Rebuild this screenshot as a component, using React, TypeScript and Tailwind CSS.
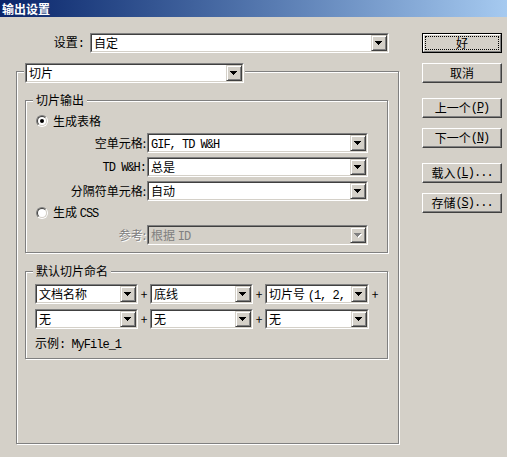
import React from "react";

type Kids = { children?: React.ReactNode };

// latin text in the dialog uses a narrow fixed-width face
const L = ({ children }: Kids) => (
  <span className="font-['Liberation_Mono',monospace] text-[12px] tracking-[-1px]">{children}</span>
);

function Arrow({ disabled }: { disabled?: boolean }) {
  const c = disabled ? "#808080" : "#000";
  return (
    <svg width="8" height="5" viewBox="0 0 8 5" shapeRendering="crispEdges">
      {disabled && (
        <g fill="#fff">
          <rect x="1" y="1" width="7" height="1" />
          <rect x="2" y="2" width="5" height="1" />
          <rect x="3" y="3" width="3" height="1" />
          <rect x="4" y="4" width="1" height="1" />
        </g>
      )}
      <g fill={c}>
        <rect x="0" y="0" width="7" height="1" />
        <rect x="1" y="1" width="5" height="1" />
        <rect x="2" y="2" width="3" height="1" />
        <rect x="3" y="3" width="1" height="1" />
      </g>
    </svg>
  );
}

function Combo({
  value,
  className,
  disabled,
}: {
  value: React.ReactNode;
  className?: string;
  disabled?: boolean;
}) {
  return (
    <div
      className={`flex h-[20px] shrink-0 border border-t-[#808080] border-l-[#808080] border-r-white border-b-white ${className ?? ""}`}
    >
      <div
        className={`flex min-w-0 flex-1 border border-t-[#404040] border-l-[#404040] border-r-[#d4d0c8] border-b-[#d4d0c8] ${
          disabled ? "bg-[#d4d0c8] text-[#808080]" : "bg-white"
        }`}
      >
        <span className="min-w-0 flex-1 overflow-hidden whitespace-nowrap pl-[2px] leading-[16px]">{value}</span>
        <div className="flex w-[16px] items-center justify-center border border-t-[#d4d0c8] border-l-[#d4d0c8] border-r-[#404040] border-b-[#404040] bg-[#d4d0c8] shadow-[inset_1px_1px_0_#fff,inset_-1px_-1px_0_#808080]">
          <Arrow disabled={disabled} />
        </div>
      </div>
    </div>
  );
}

function Radio({ checked }: { checked?: boolean }) {
  return (
    <span className="flex h-[12px] w-[12px] rounded-full border border-t-[#808080] border-l-[#808080] border-r-white border-b-white">
      <span className="flex flex-1 items-center justify-center rounded-full border border-t-[#404040] border-l-[#404040] border-r-[#d4d0c8] border-b-[#d4d0c8] bg-white">
        {checked && <span className="h-[4px] w-[4px] rounded-full bg-black" />}
      </span>
    </span>
  );
}

function Group({ title, className, children }: Kids & { title: string; className?: string }) {
  return (
    <div
      className={`ml-[8px] w-[363px] border border-[#808080] shadow-[inset_1px_1px_0_#fff,1px_1px_0_#fff] ${className ?? ""}`}
    >
      <div className="-mt-[8px] ml-[7px] h-[14px] w-fit bg-[#d4d0c8] px-[3px] leading-[14px]">{title}</div>
      {children}
    </div>
  );
}

function Btn({ children, def, className }: Kids & { def?: boolean; className?: string }) {
  if (def)
    return (
      <div className={`h-[20px] border border-black ${className ?? ""}`}>
        <div className="h-full border border-t-white border-l-white border-r-[#808080] border-b-[#808080] p-[1px]">
          <div className="flex h-full items-center justify-center border border-dotted border-black">{children}</div>
        </div>
      </div>
    );
  return (
    <div
      className={`flex h-[20px] items-center justify-center whitespace-nowrap border border-t-white border-l-white border-r-[#404040] border-b-[#404040] shadow-[inset_-1px_-1px_0_#808080] ${className ?? ""}`}
    >
      {children}
    </div>
  );
}

function Row({ label, children, className }: Kids & { label: React.ReactNode; className?: string }) {
  return (
    <div className={`flex h-[20px] items-center ${className ?? ""}`}>
      <span className="w-[121px] whitespace-nowrap pr-[1px] text-right">{label}</span>
      {children}
    </div>
  );
}

const Plus = () => <span className="w-[12px] text-center">+</span>;

export default function App() {
  return (
    <div className="h-[457px] w-[507px] overflow-hidden bg-[#d4d0c8] font-['Noto_Sans_CJK_SC','Noto_Sans',sans-serif] text-[12px] leading-[14px] text-black">
      <div className="h-[17px] bg-linear-to-r from-[#0a246a] to-[#a6caf0] pl-[2px] font-bold leading-[17px] text-white">
        输出设置
      </div>

      <div className="flex pl-[16px] pt-[16px]">
        <div className="w-[384px]">
          <div className="flex h-[20px] items-center">
            <span className="w-[68px] text-right">
              设置<L>:</L>
            </span>
            <Combo className="ml-[6px] w-[299px]" value="自定" />
          </div>

          <div className="mt-[18px] h-[373px] w-[383px] border border-[#808080] shadow-[inset_1px_1px_0_#fff,1px_1px_0_#fff]">
            <div className="-mt-[9px] ml-[7px] w-fit bg-[#d4d0c8] px-[1px]">
              <Combo className="w-[219px]" value="切片" />
            </div>

            {/* slice output */}
            <Group title="切片输出" className="mt-[17px] h-[153px]">
              <div className="ml-[10px] mt-[7px] flex h-[14px] items-center gap-[5px]">
                <Radio checked />
                <span>生成表格</span>
              </div>
              <Row className="mt-[5px]" label="空单元格:">
                <Combo className="w-[221px]" value={<L>GIF, TD W&amp;H</L>} />
              </Row>
              <Row className="mt-[4px]" label={<L>TD W&amp;H:</L>}>
                <Combo className="w-[221px]" value="总是" />
              </Row>
              <Row className="mt-[4px]" label="分隔符单元格:">
                <Combo className="w-[221px]" value="自动" />
              </Row>
              <div className="ml-[10px] mt-[5px] flex h-[14px] items-center gap-[5px]">
                <Radio />
                <span>
                  生成 <L>CSS</L>
                </span>
              </div>
              <Row
                className="mt-[5px] [&>span:first-child]:text-[#808080] [&>span:first-child]:[text-shadow:1px_1px_0_#fff]"
                label="参考:"
              >
                <Combo
                  className="w-[221px]"
                  disabled
                  value={
                    <>
                      根据 <L>ID</L>
                    </>
                  }
                />
              </Row>
            </Group>

            {/* default slice naming */}
            <Group title="默认切片命名" className="mt-[18px] h-[88px]">
              <div className="mt-[6px] flex h-[20px] items-center pl-[9px]">
                <Combo className="w-[103px]" value="文档名称" />
                <Plus />
                <Combo className="w-[103px]" value="底线" />
                <Plus />
                <Combo
                  className="w-[104px]"
                  value={
                    <>
                      切片号 <L>(1, 2,</L>
                    </>
                  }
                />
                <Plus />
              </div>
              <div className="mt-[5px] flex h-[20px] items-center pl-[9px]">
                <Combo className="w-[103px]" value="无" />
                <Plus />
                <Combo className="w-[103px]" value="无" />
                <Plus />
                <Combo className="w-[104px]" value="无" />
              </div>
              <div className="ml-[9px] mt-[7px] h-[14px]">
                示例<L>: MyFile_1</L>
              </div>
            </Group>
          </div>
        </div>

        <div className="ml-[22px] flex w-[80px] flex-col">
          <Btn def>好</Btn>
          <Btn className="mt-[10px]">取消</Btn>
          <Btn className="mt-[15px]">
            上一个 <L>(<u>P</u>)</L>
          </Btn>
          <Btn className="mt-[10px]">
            下一个 <L>(<u>N</u>)</L>
          </Btn>
          <Btn className="mt-[15px]">
            载入 <L>(<u>L</u>)...</L>
          </Btn>
          <Btn className="mt-[10px]">
            存储 <L>(<u>S</u>)...</L>
          </Btn>
        </div>
      </div>
    </div>
  );
}
